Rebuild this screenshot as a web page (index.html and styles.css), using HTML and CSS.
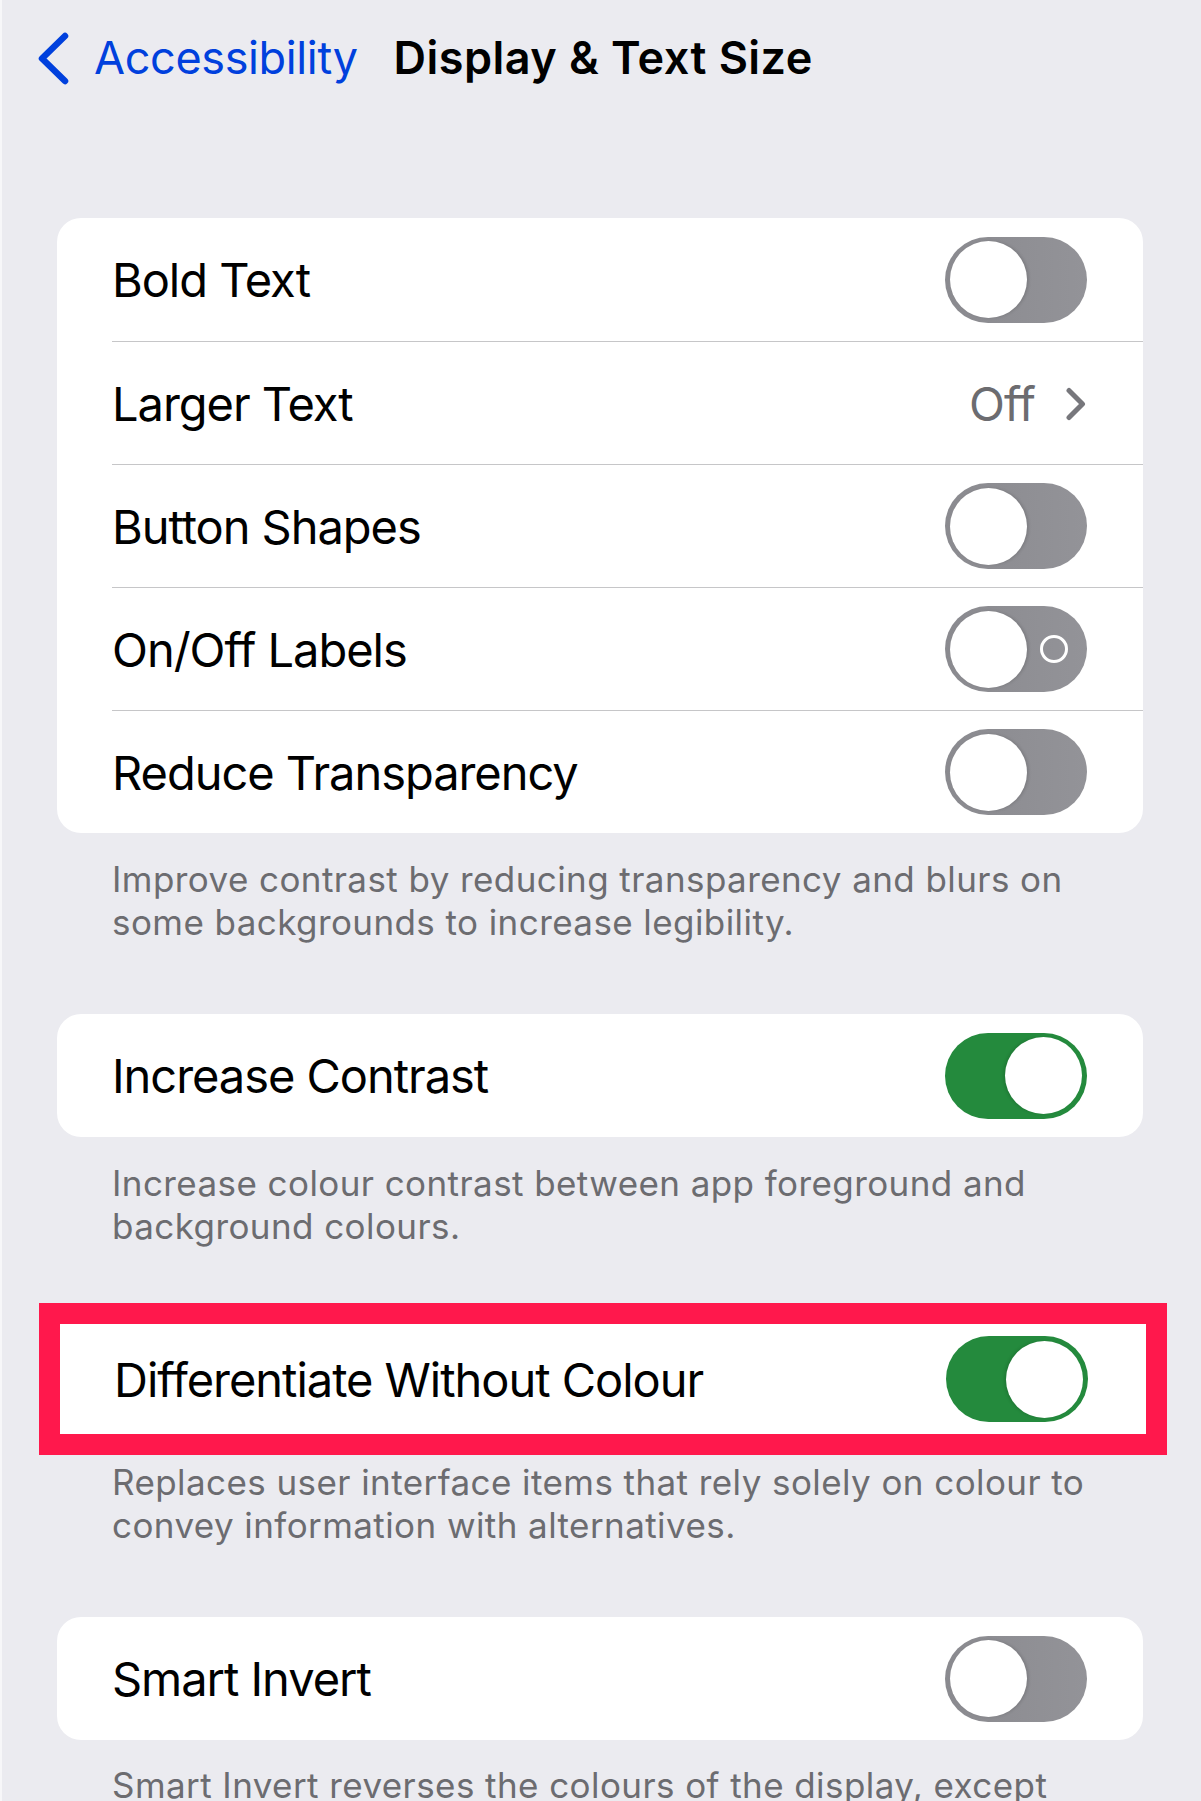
FILE: index.html
```html
<!DOCTYPE html>
<html lang="en">
<head>
<meta charset="utf-8">
<title>Display &amp; Text Size</title>
<link rel="stylesheet" href="styles.css">
</head>
<body>
<div class="screen">
  <header class="nav">
    <a class="back" href="#">
      <svg class="back-icon" width="36" height="54" viewBox="0 0 36 54" aria-hidden="true">
        <polyline points="29,5 6,27.5 29,50" fill="none" stroke="#0040dd" stroke-width="6.5" stroke-linecap="round" stroke-linejoin="round"/>
      </svg>
      <span class="back-label">Accessibility</span>
    </a>
    <h1 class="title">Display &amp; Text Size</h1>
  </header>

  <section class="group first">
    <div class="card">
      <div class="row"><div class="row-inner">
        <span class="label">Bold Text</span>
        <span class="switch off"><span class="knob"></span></span>
      </div></div>
      <div class="row"><div class="row-inner">
        <span class="label">Larger Text</span>
        <span class="detail"><span class="value">Off</span>
          <svg class="chev" width="22" height="34" viewBox="0 0 22 34" aria-hidden="true"><polyline points="4,3.5 17.5,17 4,30.5" fill="none" stroke="#77777c" stroke-width="5" stroke-linecap="round" stroke-linejoin="round"/></svg>
        </span>
      </div></div>
      <div class="row"><div class="row-inner">
        <span class="label">Button Shapes</span>
        <span class="switch off"><span class="knob"></span></span>
      </div></div>
      <div class="row"><div class="row-inner">
        <span class="label">On/Off Labels</span>
        <span class="switch off labelled"><span class="knob"></span><span class="o-mark"></span></span>
      </div></div>
      <div class="row"><div class="row-inner">
        <span class="label">Reduce Transparency</span>
        <span class="switch off"><span class="knob"></span></span>
      </div></div>
    </div>
    <p class="footer">Improve contrast by reducing transparency and blurs on<br>some backgrounds to increase legibility.</p>
  </section>

  <section class="group">
    <div class="card">
      <div class="row"><div class="row-inner">
        <span class="label">Increase Contrast</span>
        <span class="switch on"><span class="knob"></span></span>
      </div></div>
    </div>
    <p class="footer">Increase colour contrast between app foreground and<br>background colours.</p>
  </section>

  <section class="group highlighted">
    <div class="highlight">
      <div class="hl-row">
        <span class="label">Differentiate Without Colour</span>
        <span class="switch on"><span class="knob"></span></span>
      </div>
    </div>
    <p class="footer after-hl">Replaces user interface items that rely solely on colour to<br>convey information with alternatives.</p>
  </section>

  <section class="group">
    <div class="card">
      <div class="row"><div class="row-inner">
        <span class="label">Smart Invert</span>
        <span class="switch off"><span class="knob"></span></span>
      </div></div>
    </div>
    <p class="footer last">Smart Invert reverses the colours of the display, except<br>images, media and some apps that use dark colour styles.</p>
  </section>
</div>
</body>
</html>
```

FILE: styles.css
```css
html, body {
  margin: 0;
  padding: 0;
  background: #ebebf0;
}

body {
  font-family: Inter, "Noto Sans", "Liberation Sans", sans-serif;
  color: #000;
  -webkit-font-smoothing: antialiased;
}

.screen {
  width: 1201px;
  min-height: 1801px;
  background: #ebebf0;
  border-left: 2px solid #f7f7f9;
  box-sizing: border-box;
}

/* ---------- navigation bar ---------- */
.nav {
  display: flex;
  align-items: center;
  height: 54px;
  padding: 31px 0 0 34px;
}

.back {
  display: flex;
  align-items: center;
  text-decoration: none;
  color: #0040dd;
}

.back-icon {
  display: block;
  margin-right: 22px;
}

.back-label {
  font-size: 45px;
  line-height: 54px;
  letter-spacing: -0.008em;
}

.title {
  margin: 0 0 0 36px;
  font-size: 45px;
  line-height: 54px;
  font-weight: 600;
  letter-spacing: 0.01em;
  color: #000;
}

/* ---------- groups ---------- */
.group {
  margin-top: 70px;
}

.group.first {
  margin-top: 133px;
}

.group.highlighted {
  margin-top: 55px;
}

.card {
  margin: 0 58px 0 55px;
  background: #fff;
  border-radius: 24px;
  overflow: hidden;
}

.row {
  padding-left: 55px;
}

.row-inner {
  display: flex;
  align-items: center;
  justify-content: space-between;
  height: 123px;
  box-sizing: border-box;
  padding: 0 56px 0 0;
}

.row + .row .row-inner {
  border-top: 1px solid #c6c6c8;
}

.label {
  font-size: 47px;
  letter-spacing: -0.022em;
  color: #000;
  white-space: nowrap;
}

.detail {
  display: flex;
  align-items: center;
}

.value {
  font-size: 47px;
  letter-spacing: -0.02em;
  color: #6c6c70;
  margin-right: 30px;
}

.chev {
  display: block;
  margin-top: 2px;
}

/* ---------- switches ---------- */
.switch {
  display: flex;
  align-items: center;
  width: 142px;
  height: 86px;
  box-sizing: border-box;
  padding: 0 5px;
  border-radius: 43px;
  flex-shrink: 0;
}

.switch.off {
  background: linear-gradient(90deg, #8a8a8f 0%, #8e8e93 45%, #939398 100%);
  justify-content: flex-start;
}

.switch.on {
  background: #248a3d;
  justify-content: flex-end;
}

.knob {
  width: 77px;
  height: 77px;
  border-radius: 50%;
  background: #fff;
  box-shadow: 2px 0 3px rgba(0, 0, 0, 0.12);
}

.switch.on .knob {
  box-shadow: -2px 0 3px rgba(0, 0, 0, 0.12);
}

.switch.labelled {
  justify-content: space-between;
  padding-right: 19px;
}

.o-mark {
  width: 22px;
  height: 22px;
  border: 3px solid #fff;
  border-radius: 50%;
}

/* ---------- highlighted row ---------- */
.highlight {
  margin: 0 34px 0 37px;
  border: 21px solid #ff184c;
  background: #fff;
}

.hl-row {
  display: flex;
  align-items: center;
  justify-content: space-between;
  height: 110px;
  padding: 0 58px 0 54px;
}

/* ---------- footers ---------- */
.footer {
  margin: 25px 0 0;
  padding: 0 30px 0 110px;
  font-size: 35px;
  line-height: 43px;
  letter-spacing: 0.012em;
  color: #6c6c70;
  white-space: nowrap;
}

.footer.after-hl {
  margin-top: 6px;
}

.footer.last {
  margin-top: 24px;
}
```
